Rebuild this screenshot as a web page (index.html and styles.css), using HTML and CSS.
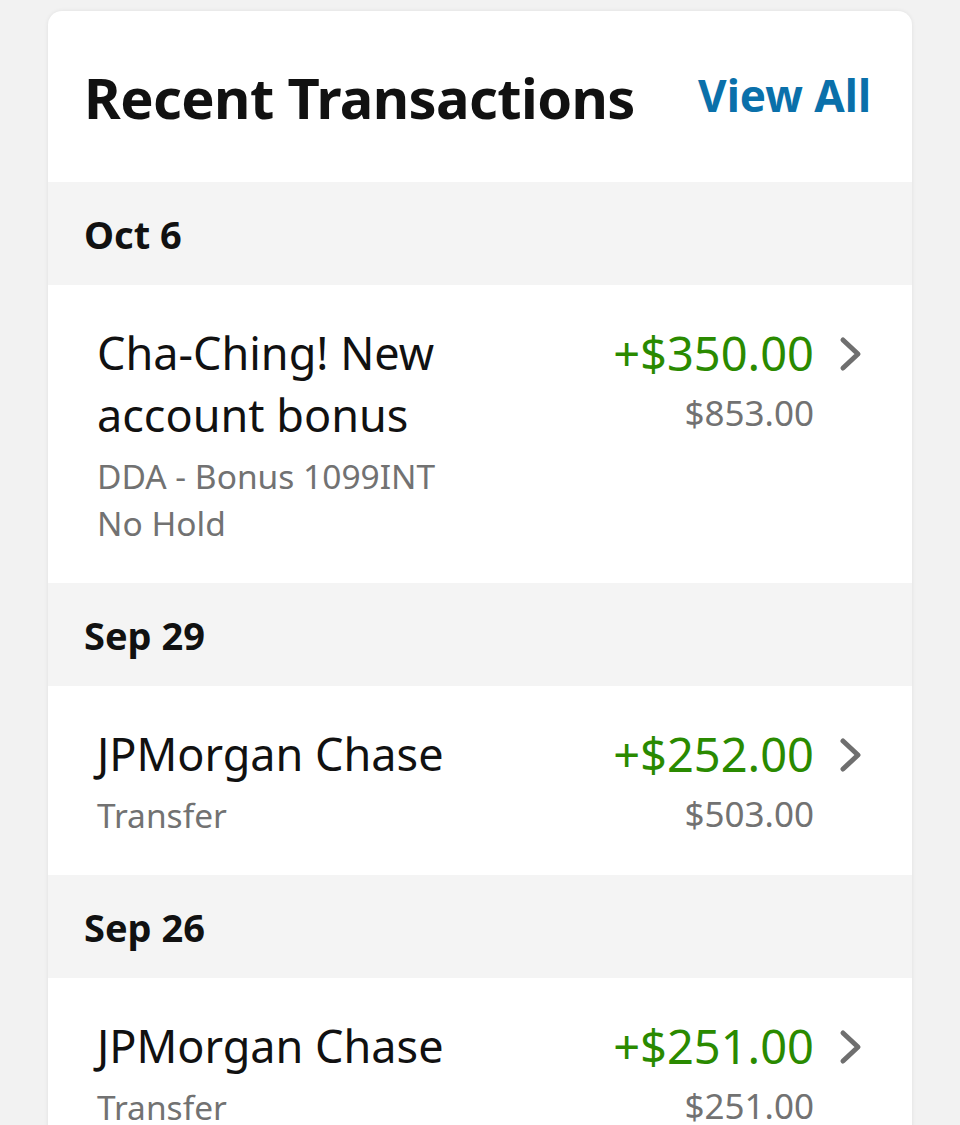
FILE: index.html
```html
<!DOCTYPE html>
<html>
<head>
<meta charset="utf-8">
<link rel="stylesheet" href="styles.css">
</head>
<body>
<div class="card">
  <div class="header">
    <h1 class="title">Recent Transactions</h1>
    <a class="view-all">View All</a>
  </div>

  <div class="date">Oct 6</div>
  <div class="row">
    <div class="info">
      <div class="name">Cha-Ching! New<br>account bonus</div>
      <div class="subs">
        <div class="sub">DDA - Bonus 1099INT</div>
        <div class="sub">No Hold</div>
      </div>
    </div>
    <div class="money">
      <div class="amount">+$350.00</div>
      <div class="balance">$853.00</div>
    </div>
    <svg class="chev" viewBox="0 0 26 36"><path d="M5 4 L20 18 L5 32" fill="none" stroke="#6f6f6f" stroke-width="5" stroke-linecap="round" stroke-linejoin="round"/></svg>
  </div>

  <div class="date">Sep 29</div>
  <div class="row">
    <div class="info">
      <div class="name">JPMorgan Chase</div>
      <div class="subs">
        <div class="sub">Transfer</div>
      </div>
    </div>
    <div class="money">
      <div class="amount">+$252.00</div>
      <div class="balance">$503.00</div>
    </div>
    <svg class="chev" viewBox="0 0 26 36"><path d="M5 4 L20 18 L5 32" fill="none" stroke="#6f6f6f" stroke-width="5" stroke-linecap="round" stroke-linejoin="round"/></svg>
  </div>

  <div class="date">Sep 26</div>
  <div class="row">
    <div class="info">
      <div class="name">JPMorgan Chase</div>
      <div class="subs">
        <div class="sub">Transfer</div>
      </div>
    </div>
    <div class="money">
      <div class="amount">+$251.00</div>
      <div class="balance">$251.00</div>
    </div>
    <svg class="chev" viewBox="0 0 26 36"><path d="M5 4 L20 18 L5 32" fill="none" stroke="#6f6f6f" stroke-width="5" stroke-linecap="round" stroke-linejoin="round"/></svg>
  </div>
</div>
</body>
</html>
```
FILE: styles.css
```css
html, body {
  margin: 0;
  padding: 0;
  background: #f2f2f2;
  font-family: "Noto Sans", "Open Sans", sans-serif;
}
.card {
  margin: 11px 48px 0 48px;
  background: #fff;
  border-radius: 14px 14px 0 0;
  box-shadow: 0 0 4px rgba(0,0,0,0.08);
  overflow: hidden;
}
.header {
  height: 171px;
  display: flex;
  align-items: center;
  justify-content: space-between;
  padding: 0 41px 0 36px;
}
.title {
  margin: 0;
  font-size: 56px;
  font-weight: 700;
  color: #111;
  letter-spacing: -0.6px;
}
.view-all {
  font-size: 44px;
  font-weight: 700;
  color: #0a70aa;
  margin-top: -4px;
}
.date {
  background: #f4f4f4;
  height: 103px;
  display: flex;
  align-items: center;
  padding-left: 36px;
  font-size: 38px;
  font-weight: 700;
  color: #111;
}
.row {
  display: flex;
  align-items: flex-start;
  padding: 37px 48px 36px 49px;
}
.info {
  flex: 1;
}
.name {
  font-size: 45px;
  line-height: 62px;
  color: #111;
}
.subs {
  margin-top: 7px;
}
.sub {
  font-size: 33.5px;
  line-height: 47px;
  color: #727272;
}
.money {
  text-align: right;
}
.amount {
  font-size: 47px;
  line-height: 62px;
  color: #2a8a00;
}
.balance {
  font-size: 35px;
  line-height: 46px;
  margin-top: 6px;
  color: #727272;
}
.chev {
  width: 26px;
  height: 36px;
  margin: 14px 0 0 24px;
}
```
